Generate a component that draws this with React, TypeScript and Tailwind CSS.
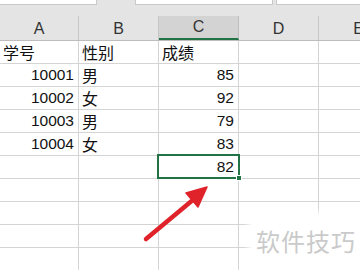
import React from 'react';

const cols = [
    { key: 'A', w: 'w-[79px]' },
    { key: 'B', w: 'w-[80px]' },
    { key: 'C', w: 'w-[80px]' },
    { key: 'D', w: 'w-[80px]' },
    { key: 'E', w: 'w-[80px]' },
];

const rows: { a?: string; b?: string; c?: string; head?: boolean }[] = [
    { a: '学号', b: '性别', c: '成绩', head: true },
    { a: '10001', b: '男', c: '85' },
    { a: '10002', b: '女', c: '92' },
    { a: '10003', b: '男', c: '79' },
    { a: '10004', b: '女', c: '83' },
    { c: '82' },
    {},
    {},
    {},
    {},
];

const latin = "font-['Liberation_Sans','Noto_Sans_CJK_SC',sans-serif]";
const cjk = "font-['Noto_Sans_CJK_SC',sans-serif] text-[16px]";

export default function App() {
    return (
        <div className={`relative w-[360px] h-[270px] overflow-hidden bg-white text-[#111] ${latin}`}>
            {/* formula bar strip */}
            <div className="h-[16px] bg-[#e4e4e4] flex items-start">
                <div className="w-[97px] h-[5px] bg-white border-r border-b border-[#c9c9c9]" />
                <div className="w-[38px]" />
                <div className="w-[138px] h-[5px] bg-white border-l border-r border-b border-[#c9c9c9]" />
                <div className="w-[3px]" />
                <div className="flex-1 h-[5px] bg-white border-l border-b border-[#c9c9c9]" />
            </div>

            {/* column headers */}
            <div className="h-[25px] w-[400px] flex bg-[#e4e4e4] border-b border-[#bdbdbd]">
                {cols.map((c) => (
                    <div
                        key={c.key}
                        className={`${c.w} shrink-0 flex items-end justify-center pb-[1px] text-[16px] leading-none text-[#333] ${
                            c.key === 'C'
                                ? 'bg-[#d3d3d3] border-b-2 border-[#217346] border-r border-r-[#bdbdbd]'
                                : 'border-r border-[#c6c6c6]'
                        }`}
                    >
                        <span className="pb-[2px]">{c.key}</span>
                    </div>
                ))}
            </div>

            {/* grid body */}
            {rows.map((r, i) => (
                <div key={i} className="h-[23px] flex border-b border-[#d4d4d4] text-[15.5px]">
                    <div className={`w-[79px] border-r border-[#d4d4d4] flex items-center ${r.head ? `justify-start pl-[3px] ${cjk}` : 'justify-end pr-[4px]'}`}>
                        {r.a}
                    </div>
                    <div className={`w-[80px] border-r border-[#d4d4d4] flex items-center pl-[3px] ${cjk}`}>{r.b}</div>
                    <div className={`w-[80px] border-r border-[#d4d4d4] flex items-center ${r.head ? `justify-start pl-[3px] ${cjk}` : 'justify-end pr-[4px]'}`}>
                        {r.c}
                    </div>
                    <div className="w-[80px] border-r border-[#d4d4d4]" />
                    <div className="flex-1" />
                </div>
            ))}

            {/* active cell C6 */}
            <div className="absolute left-[157px] top-[154px] w-[83px] h-[25px] border-2 border-[#217346]" />
            <div className="absolute left-[236px] top-[175px] w-[6px] h-[6px] bg-[#217346] border border-white" />

            {/* watermark */}
            <div className="absolute left-[252px] top-[216px] w-[120px] h-[60px] bg-white shadow-[0_0_6px_4px_#ffffff]" />
            <div className={`absolute left-[256px] top-[226px] text-[24px] leading-[30px] text-[#cacaca] tracking-[1px] font-['Noto_Sans_CJK_SC',sans-serif]`}>
                软件技巧
            </div>

            {/* red pointer arrow */}
            <svg className="absolute left-0 top-0" width="360" height="270" viewBox="0 0 360 270">
                <line x1="146" y1="239" x2="194" y2="199" stroke="#e0232b" strokeWidth="4.5" strokeLinecap="round" />
                <polygon points="207,187 186,193 198,207" fill="#e0232b" stroke="#e0232b" strokeWidth="1.5" strokeLinejoin="round" />
            </svg>
        </div>
    );
}
